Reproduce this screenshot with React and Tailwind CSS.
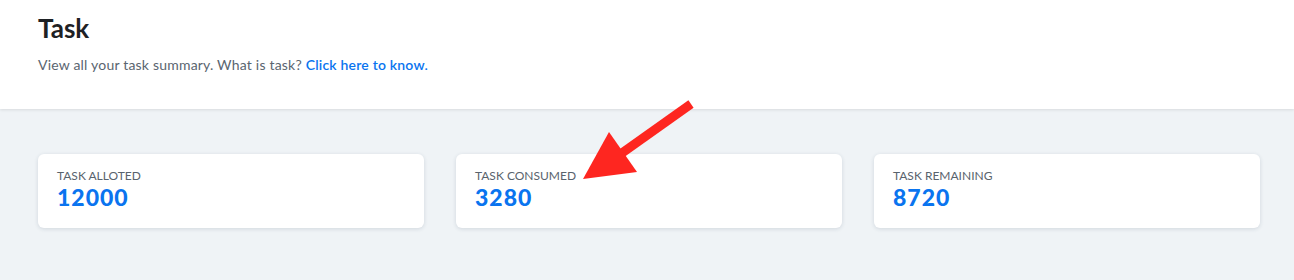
import React from "react";

const cards = [
  { label: "TASK ALLOTED", value: "12000" },
  { label: "TASK CONSUMED", value: "3280" },
  { label: "TASK REMAINING", value: "8720" },
];

export default function App() {
  return (
    <div
      className="relative w-[1294px] h-[280px] bg-[#eff3f6] overflow-hidden"
      style={{ fontFamily: "Lato, 'Open Sans', sans-serif" }}
    >
      <header className="relative z-10 h-[109px] bg-white pl-[38px] pt-[12px] shadow-[0_1px_3px_rgba(0,0,0,0.10)]">
        <h1 className="text-[26px] leading-[32px] font-bold text-[#1e2124]">Task</h1>
        <p className="mt-[11px] text-[14px] leading-[20px] tracking-[0.2px] text-[#5a6570]">
          View all your task summary. What is task?{" "}
          <a className="text-[#0a74ef] font-semibold" href="#">Click here to know.</a>
        </p>
      </header>
      <div className="grid grid-cols-3 gap-8 pl-[38px] pr-[34px] pt-[45px]">
        {cards.map((c) => (
          <div
            key={c.label}
            className="h-[74px] rounded-md bg-white pl-[19px] pt-[14px] shadow-[0_1px_4px_rgba(30,50,80,0.14)]"
          >
            <div className="text-[12px] leading-[16px] text-[#59636d]">{c.label}</div>
            <div className="text-[23px] leading-[26px] font-black text-[#0a74ef] tracking-[1px]">
              {c.value}
            </div>
          </div>
        ))}
      </div>
      <svg
        className="absolute left-0 top-0 z-20 pointer-events-none"
        width="1294"
        height="280"
        viewBox="0 0 1294 280"
      >
        <line x1="691" y1="104" x2="622" y2="153" stroke="#fe2620" strokeWidth="9" />
        <polygon points="609,132 637,172 583,179" fill="#fe2620" />
      </svg>
    </div>
  );
}
